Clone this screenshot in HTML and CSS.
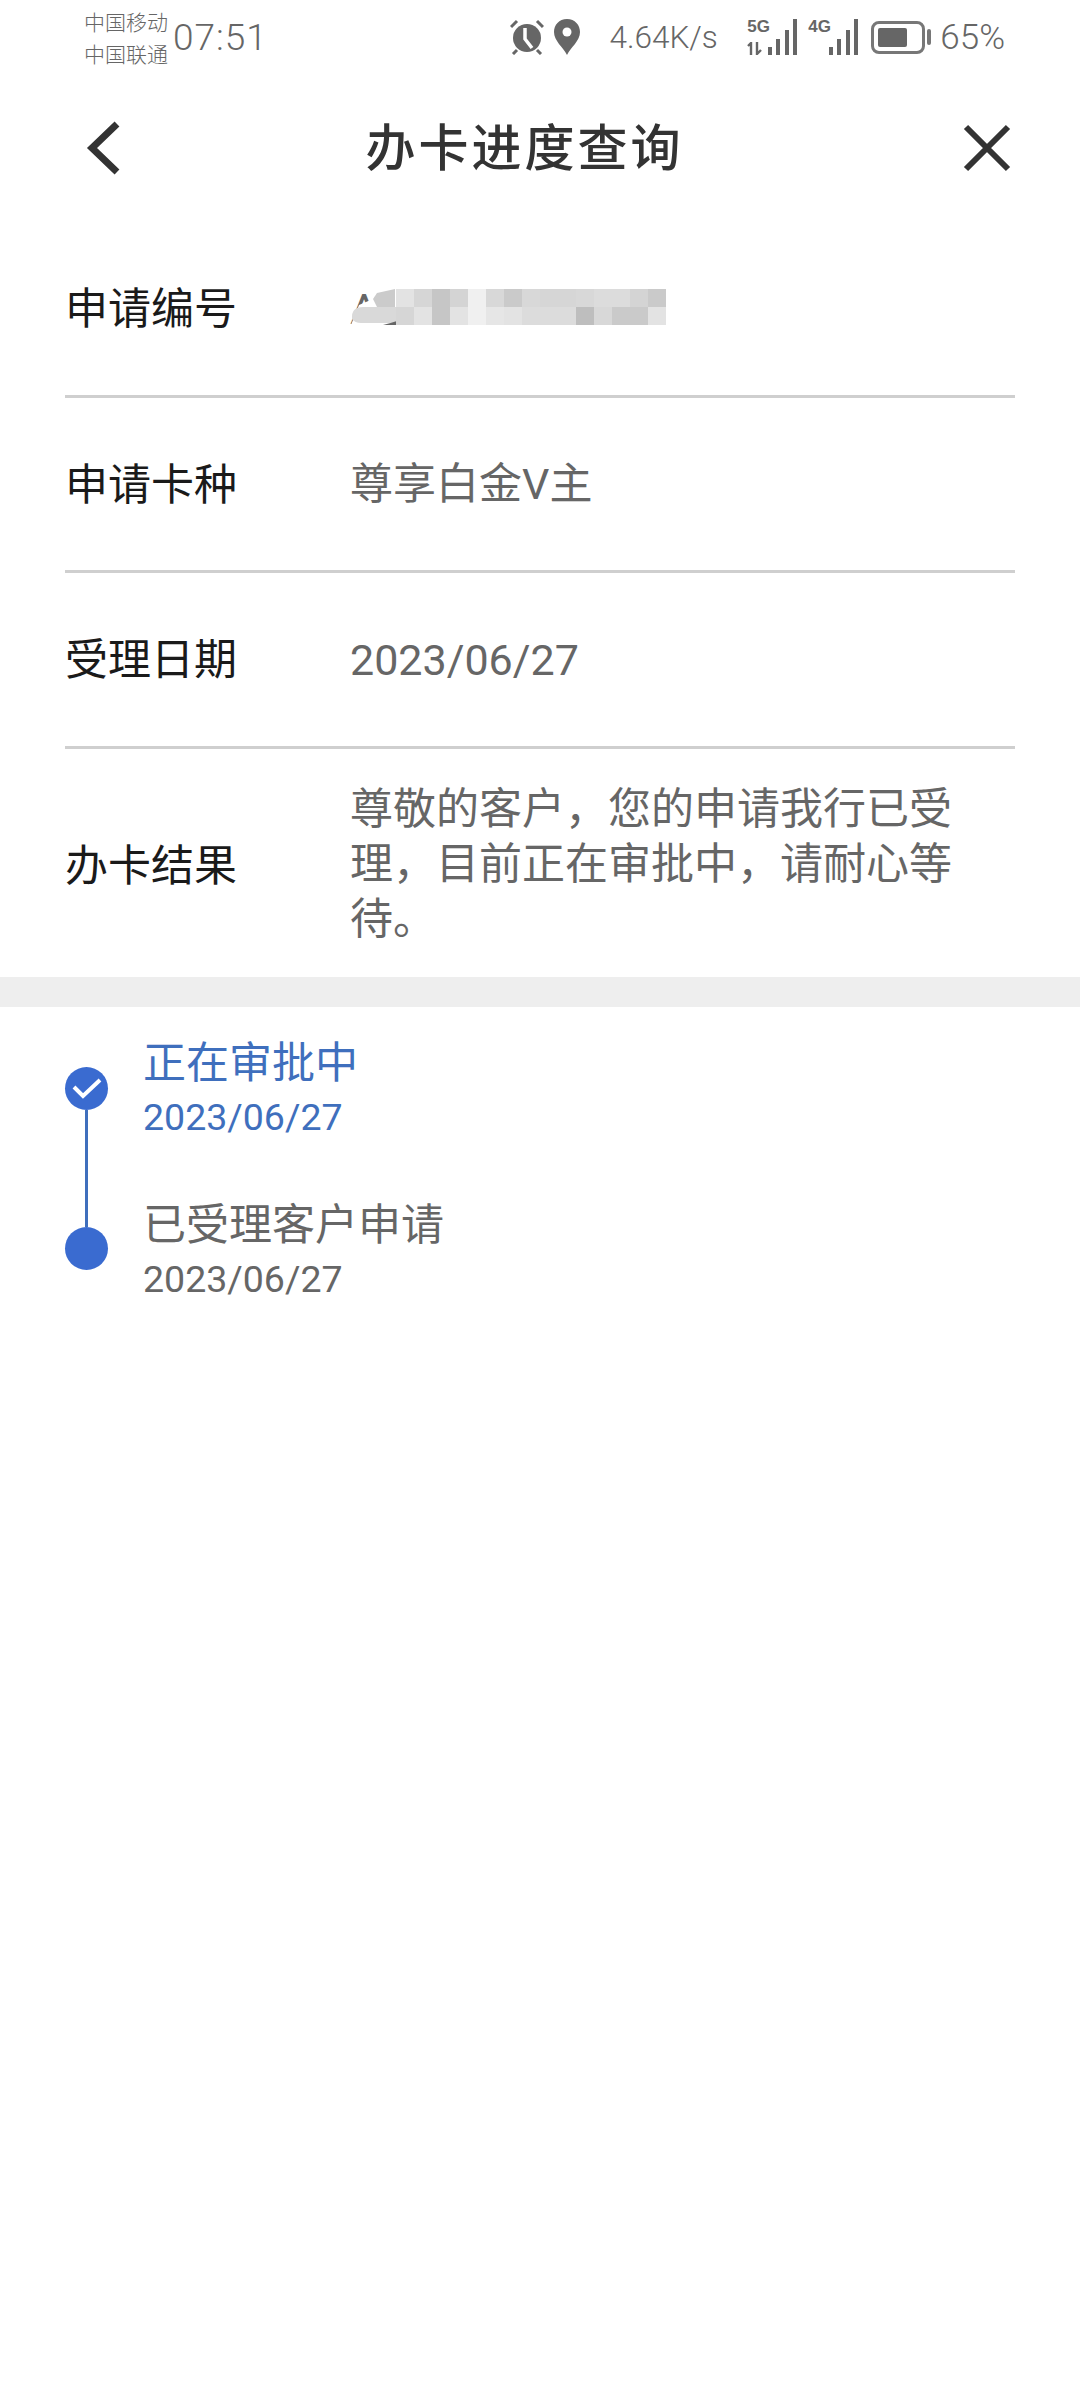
FILE: index.html
```html
<!DOCTYPE html>
<html lang="zh-CN">
  <head>
    <meta charset="UTF-8" />
    <meta name="viewport" content="width=device-width, initial-scale=1.0" />
    <title>办卡进度查询</title>
    <link rel="stylesheet" href="styles.css">
  </head>
  <body>
    <div class="statusbar">
      <div class="carrier">
        <span>中国移动</span>
        <span>中国联通</span>
      </div>
      <span class="clock">07:51</span>
      <div class="status-right">
        <svg class="ic-alarm" width="34" height="36" viewBox="0 0 34 36">
          <circle cx="17" cy="19" r="14" fill="#666" />
          <path d="M1 8 L7 2 M33 8 L27 2 M7 31 L3 35 M27 31 L31 35" stroke="#666" stroke-width="3" fill="none" />
          <path d="M15 9 V20 L22 29" stroke="#fff" stroke-width="3.5" fill="none" />
        </svg>
        <svg class="ic-pin" width="26" height="36" viewBox="0 0 26 36">
          <path d="M13 0 C5 0 0 6 0 13 C0 22 9 28 13 36 C17 28 26 22 26 13 C26 6 21 0 13 0 Z" fill="#666" />
          <circle cx="13" cy="13" r="4.5" fill="#fff" />
        </svg>
        <span class="speed">4.64K/s</span>
        <div class="signal signal-5g">
          <div class="net">
            <b>5G</b>
            <svg width="18" height="13" viewBox="0 0 18 13">
              <path d="M1 4 L4 1 V13 M10 0 V12 L14 8" stroke="#666" stroke-width="2.4" fill="none" />
            </svg>
          </div>
          <svg width="30" height="36" viewBox="0 0 30 36">
            <path d="M0 28 H4 V36 H0 Z M8 20 H12 V36 H8 Z M17 11 H21 V36 H17 Z M25 0 H29 V36 H25 Z" fill="#666" />
          </svg>
        </div>
        <div class="signal signal-4g">
          <div class="net">
            <b>4G</b>
            <svg width="18" height="13" viewBox="0 0 18 13"></svg>
          </div>
          <svg width="30" height="36" viewBox="0 0 30 36">
            <path d="M0 28 H4 V36 H0 Z M8 20 H12 V36 H8 Z M17 11 H21 V36 H17 Z M25 0 H29 V36 H25 Z" fill="#666" />
          </svg>
        </div>
        <div class="battery"><div class="battery-level"></div></div>
        <div class="battery-cap"></div>
        <span class="percent">65%</span>
      </div>
    </div>

    <header class="nav">
      <svg class="nav-icon" width="38" height="56" viewBox="0 0 38 56">
        <path d="M33 4 L8 28 L33 52" stroke="#333" stroke-width="7" fill="none" />
      </svg>
      <h1>办卡进度查询</h1>
      <svg class="nav-icon" width="48" height="48" viewBox="0 0 48 48">
        <path d="M3 3 L45 45 M45 3 L3 45" stroke="#333" stroke-width="6" fill="none" />
      </svg>
    </header>

    <section class="details">
      <div class="row">
        <div class="label">申请编号</div>
        <div class="value masked">
          A5
          <svg class="smudge" width="48" height="36" viewBox="0 0 48 36">
            <path d="M2 36 L10 16 L24 10 L48 0 V36 Z" fill="#fff" />
            <path d="M24 10 L28 4 L46 0 V18 L28 18 Z" fill="#cbcbcb" />
            <path d="M3 30 Q2 18 14 18 H48 V34 H12 Q6 34 3 30 Z" fill="#d9d9d9" />
            <path d="M34 36 Q42 34 48 32 V36 Z" fill="#666" />
          </svg>
          <div class="mosaic">
            <i class="g-e3"></i><i class="g-d6"></i><i class="g-c6"></i><i class="g-d4"></i><i class="g-f0"></i><i class="g-d8"></i><i class="g-ca"></i><i class="g-d8"></i><i class="g-d6"></i><i class="g-d6"></i><i class="g-d8"></i><i class="g-dc"></i><i class="g-dc"></i><i class="g-d4"></i><i class="g-ca"></i>
            <i class="g-d6"></i><i class="g-e3"></i><i class="g-c6"></i><i class="g-e3"></i><i class="g-f0"></i><i class="g-e6"></i><i class="g-e3"></i><i class="g-dc"></i><i class="g-dc"></i><i class="g-dc"></i><i class="g-be"></i><i class="g-d8"></i><i class="g-ca"></i><i class="g-ca"></i><i class="g-e3"></i>
          </div>
        </div>
      </div>
      <div class="row">
        <div class="label">申请卡种</div>
        <div class="value">尊享白金V主</div>
      </div>
      <div class="row">
        <div class="label">受理日期</div>
        <div class="value">2023/06/27</div>
      </div>
      <div class="row row-result">
        <div class="label">办卡结果</div>
        <div class="value">尊敬的客户，您的申请我行已受理，目前正在审批中，请耐心等待。</div>
      </div>
    </section>

    <div class="band"></div>

    <section class="timeline">
      <div class="rail">
        <div class="dot">
          <svg width="30" height="22" viewBox="0 0 30 22">
            <path d="M2 10 L11 19 L28 3" stroke="#fff" stroke-width="4" fill="none" />
          </svg>
        </div>
        <div class="rail-line"></div>
        <div class="dot"></div>
      </div>
      <div class="steps">
        <div class="step step-active">
          <div class="step-title">正在审批中</div>
          <div class="step-date">2023/06/27</div>
        </div>
        <div class="step">
          <div class="step-title">已受理客户申请</div>
          <div class="step-date">2023/06/27</div>
        </div>
      </div>
    </section>
  </body>
</html>
```

FILE: styles.css
```css
:root {
  --text: #666;
  --blue: #3f6fbd;
  --dot: #3a6bd0;
  --line: #cfcfcf;
}

* {
  box-sizing: border-box;
}

body {
  margin: 0;
  background: #fff;
  color: var(--text);
  font-family: "Noto Sans CJK SC", "Noto Sans", sans-serif;
}

.statusbar {
  display: flex;
  align-items: center;
  height: 74px;
  padding: 0 75px 0 84px;
}

.carrier {
  display: flex;
  flex-direction: column;
  font-size: 21px;
  line-height: 32px;
  font-weight: 300;
  width: 89px;
}

.clock {
  font-family: Roboto, sans-serif;
  font-weight: 300;
  font-size: 37px;
  letter-spacing: 1px;
}

.status-right {
  display: flex;
  align-items: center;
  margin-left: auto;
}

.ic-pin {
  margin-left: 10px;
}

.speed {
  font-family: Roboto, sans-serif;
  font-weight: 300;
  font-size: 31.5px;
  margin-left: 29px;
}

.signal {
  display: flex;
  align-items: flex-end;
}

.signal-5g {
  margin-left: 29.5px;
}

.signal-4g {
  margin-left: 10px;
}

.net {
  display: flex;
  flex-direction: column;
  justify-content: space-between;
  width: 21px;
  height: 36px;
  font-family: "Liberation Sans Narrow", "Liberation Sans", sans-serif;
  font-size: 17px;
  line-height: 16px;
}

.battery {
  width: 54px;
  height: 33px;
  margin-left: 12px;
  padding: 4px;
  border: 3px solid #777;
  border-radius: 8px;
}

.battery-level {
  width: 29px;
  height: 100%;
  background: #666;
  border-radius: 2px;
}

.battery-cap {
  width: 4px;
  height: 16px;
  margin-left: 2px;
  background: #777;
  border-radius: 2px;
}

.percent {
  font-family: Roboto, sans-serif;
  font-weight: 300;
  font-size: 35px;
  margin-left: 9px;
}

.nav {
  display: flex;
  align-items: center;
  justify-content: space-between;
  height: 148px;
  padding: 0 69px 0 84px;
}

.nav h1 {
  margin: 0 36px 8px 0;
  color: #333;
  font-size: 50px;
  font-weight: 500;
  letter-spacing: 3px;
}

.details {
  padding: 0 65px;
}

.row {
  display: flex;
  align-items: center;
  height: 175.5px;
  border-bottom: 3px solid var(--line);
}

.row-result {
  height: 228px;
  border-bottom: none;
}

.label {
  flex: none;
  width: 285px;
  margin-bottom: 6px;
  color: #1a1a1a;
  font-size: 43px;
}

.value {
  margin-top: 2px;
  color: var(--text);
  font-family: Roboto, "Noto Sans CJK SC", sans-serif;
  font-size: 43px;
  line-height: 55px;
}

.row-result .label {
  margin-bottom: 2px;
}

.row-result .value {
  margin-top: 3px;
}

.masked {
  position: relative;
  width: 320px;
}

.smudge {
  position: absolute;
  top: 7px;
  left: -1px;
}

.mosaic {
  position: absolute;
  top: 7px;
  left: 46px;
  display: grid;
  grid-template-columns: repeat(15, 18px);
  grid-auto-rows: 18px;
}

.g-be { background: #bebebe; }
.g-c6 { background: #c6c6c6; }
.g-ca { background: #cacaca; }
.g-d4 { background: #d4d4d4; }
.g-d6 { background: #d6d6d6; }
.g-d8 { background: #d8d8d8; }
.g-dc { background: #dcdcdc; }
.g-e3 { background: #e3e3e3; }
.g-e6 { background: #e6e6e6; }
.g-f0 { background: #f0f0f0; }

.band {
  height: 30px;
  background: #eee;
}

.timeline {
  display: flex;
  gap: 35px;
  padding: 21px 0 0 65px;
}

.rail {
  display: flex;
  flex-direction: column;
  align-items: center;
  width: 43px;
  padding: 39px 0 35px;
}

.dot {
  display: flex;
  align-items: center;
  justify-content: center;
  flex: none;
  width: 43px;
  height: 43px;
  border-radius: 50%;
  background: var(--dot);
}

.rail-line {
  flex: 1;
  width: 3px;
  background: var(--blue);
}

.steps {
  display: flex;
  flex-direction: column;
  gap: 47px;
}

.step-title {
  font-size: 43px;
  line-height: 63px;
}

.step-date {
  font-family: Roboto, sans-serif;
  font-size: 37.5px;
  line-height: 52px;
}

.step-active {
  color: var(--blue);
}
```
